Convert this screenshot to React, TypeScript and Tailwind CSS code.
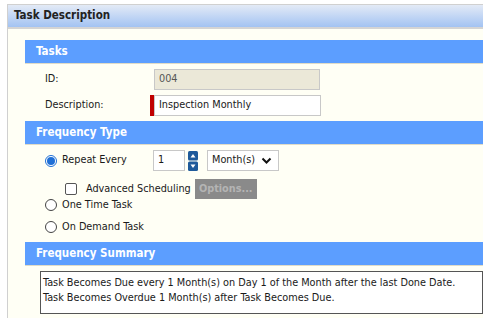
export default function App() {
  const font = "font-['DejaVu_Sans_Condensed','DejaVu_Sans',sans-serif]";
  return (
    <div className={`h-[318px] w-[483px] overflow-hidden bg-white pt-1 pl-[7px] ${font} text-[10.8px] text-[#1a1a1a]`}>
      <div className="h-full border-l border-t border-[#d0d0d0] bg-[#fffff5]">
        <div className="flex h-6 items-center border-b-2 border-[#d4d4d4] bg-gradient-to-b from-[#e3eaf6] to-[#a3c3f2] pl-[6px] text-[11.5px] font-bold text-[#222]">
          Task Description
        </div>
        <div className="pl-[17px] pt-[11px]">
          <SectionHeader title="Tasks" />
          <div className="flex flex-col gap-[5px] py-[5px]">
            <div className="flex h-[21px] items-center">
              <span className="w-[129px] pl-5">ID:</span>
              <div className="flex h-[21px] w-[166px] items-center border border-[#c8c8c8] bg-[#ebe8d8] px-1 text-[#555]">004</div>
            </div>
            <div className="flex h-[21px] items-center">
              <span className="w-[125px] pl-5">Description:</span>
              <div className="h-[21px] w-1 bg-[#c00000]" />
              <div className="flex h-[21px] w-[167px] items-center border border-[#c8c8c8] bg-white px-1">Inspection Monthly</div>
            </div>
          </div>
          <SectionHeader title="Frequency Type" />
          <div className="mt-[5px] flex h-[21px] items-center pl-5">
            <span className="flex h-3 w-3 items-center justify-center rounded-full border border-[#1f6fd6] bg-white">
              <span className="h-2 w-2 rounded-full bg-[#1f6fd6]" />
            </span>
            <span className="ml-[5px] w-[91px]">Repeat Every</span>
            <div className="flex h-[21px] w-[32px] items-center border border-[#c8c8c8] bg-white px-1">1</div>
            <Spinner />
            <div className="ml-[9px] flex h-[21px] w-[72px] items-center justify-between border border-[#c8c8c8] bg-white pl-1 pr-[6px]">
              <span>Month(s)</span>
              <svg width="11" height="8" viewBox="0 0 11 8">
                <path d="M1.5 1.5 L5.5 5.5 L9.5 1.5" fill="none" stroke="#111" strokeWidth="2" />
              </svg>
            </div>
          </div>
          <div className="mt-[8px] flex h-5 items-center whitespace-nowrap pl-10">
            <span className="h-3 w-3 rounded-[2px] border border-[#555] bg-white" />
            <span className="ml-[9px]">Advanced Scheduling</span>
            <div className="ml-1 flex h-5 w-[62px] items-center justify-center bg-[#8a8a8a] font-bold text-[#b4b4b4]">Options...</div>
          </div>
          <div className="-mt-px">
            <Radio label="One Time Task" />
          </div>
          <div className="mt-2">
            <Radio label="On Demand Task" />
          </div>
          <div className="mt-2">
            <SectionHeader title="Frequency Summary" />
          </div>
          <div className="ml-[15px] mt-[5px] h-[43px] whitespace-nowrap border border-[#555] bg-white px-[2px] pt-[3px] leading-[15px]">
            <div>Task Becomes Due every 1 Month(s) on Day 1 of the Month after the last Done Date.</div>
            <div>Task Becomes Overdue 1 Month(s) after Task Becomes Due.</div>
          </div>
        </div>
      </div>
    </div>
  );
}

function SectionHeader({ title }: { title: string }) {
  return (
    <div className="flex h-6 items-center border-b border-[#e0dcc8] bg-[#5c9eff] pl-[11px] text-[11.5px] font-bold text-white">
      {title}
    </div>
  );
}

function Radio({ label }: { label: string }) {
  return (
    <div className="flex h-[14px] items-center pl-5">
      <span className="h-3 w-3 rounded-full border border-[#444] bg-white" />
      <span className="ml-[5px]">{label}</span>
    </div>
  );
}

function Spinner() {
  return (
    <svg className="ml-[3px]" width="10" height="20" viewBox="0 0 10 20">
      <rect x="0" y="0" width="10" height="9.5" rx="1.5" fill="#1f5a9a" />
      <rect x="0" y="10.5" width="10" height="9.5" rx="1.5" fill="#1f5a9a" />
      <path d="M2.5 6.5 L5 3 L7.5 6.5 Z" fill="#fff" />
      <path d="M2.5 13.5 L5 17 L7.5 13.5 Z" fill="#fff" />
    </svg>
  );
}
